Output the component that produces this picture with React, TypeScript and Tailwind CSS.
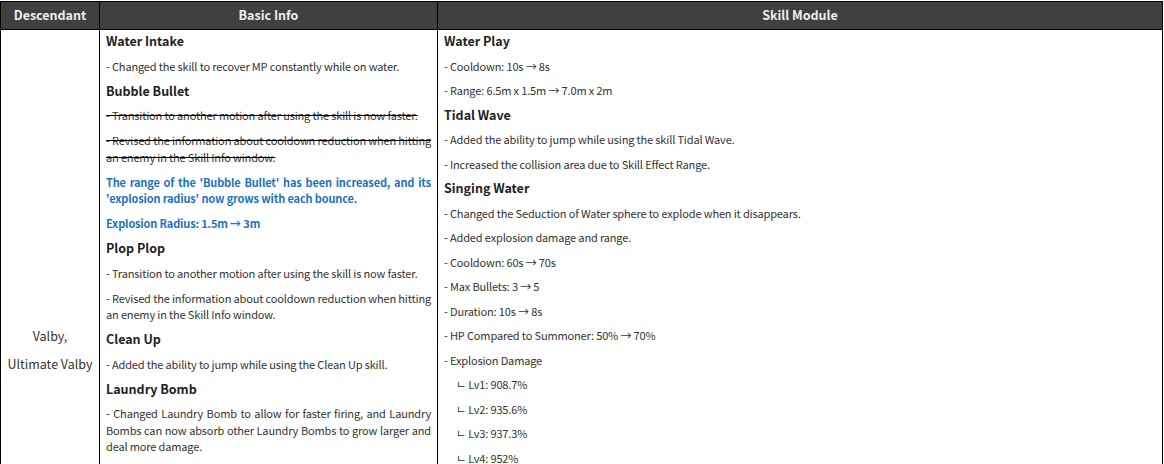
const basic: { kind: "h" | "p" | "s" | "b"; text: string }[] = [
  { kind: "h", text: "Water Intake" },
  { kind: "p", text: "- Changed the skill to recover MP constantly while on water." },
  { kind: "h", text: "Bubble Bullet" },
  { kind: "s", text: "- Transition to another motion after using the skill is now faster." },
  { kind: "s", text: "- Revised the information about cooldown reduction when hitting an enemy in the Skill Info window." },
  { kind: "b", text: "The range of the 'Bubble Bullet' has been increased, and its 'explosion radius' now grows with each bounce." },
  { kind: "b", text: "Explosion Radius: 1.5m → 3m" },
  { kind: "h", text: "Plop Plop" },
  { kind: "p", text: "- Transition to another motion after using the skill is now faster." },
  { kind: "p", text: "- Revised the information about cooldown reduction when hitting an enemy in the Skill Info window." },
  { kind: "h", text: "Clean Up" },
  { kind: "p", text: "- Added the ability to jump while using the Clean Up skill." },
  { kind: "h", text: "Laundry Bomb" },
  { kind: "p", text: "- Changed Laundry Bomb to allow for faster firing, and Laundry Bombs can now absorb other Laundry Bombs to grow larger and deal more damage." },
];

const skill: { kind: "h" | "p" | "l"; text: string }[] = [
  { kind: "h", text: "Water Play" },
  { kind: "p", text: "- Cooldown: 10s → 8s" },
  { kind: "p", text: "- Range: 6.5m x 1.5m → 7.0m x 2m" },
  { kind: "h", text: "Tidal Wave" },
  { kind: "p", text: "- Added the ability to jump while using the skill Tidal Wave." },
  { kind: "p", text: "- Increased the collision area due to Skill Effect Range." },
  { kind: "h", text: "Singing Water" },
  { kind: "p", text: "- Changed the Seduction of Water sphere to explode when it disappears." },
  { kind: "p", text: "- Added explosion damage and range." },
  { kind: "p", text: "- Cooldown: 60s → 70s" },
  { kind: "p", text: "- Max Bullets: 3 → 5" },
  { kind: "p", text: "- Duration: 10s → 8s" },
  { kind: "p", text: "- HP Compared to Summoner: 50% → 70%" },
  { kind: "p", text: "- Explosion Damage" },
  { kind: "l", text: "ㄴ Lv1: 908.7%" },
  { kind: "l", text: "ㄴ Lv2: 935.6%" },
  { kind: "l", text: "ㄴ Lv3: 937.3%" },
  { kind: "l", text: "ㄴ Lv4: 952%" },
];

function Line({ kind, text }: { kind: string; text: string }) {
  if (kind === "h")
    return <p className="text-[12.5px] font-bold leading-[16.5px] text-[#222] mb-[8px]">{text}</p>;
  if (kind === "s")
    return <p className="text-[11px] tracking-[-0.15px] leading-[16.5px] text-[#333] line-through decoration-black mb-[8.5px] text-justify">{text}</p>;
  if (kind === "b")
    return <p className="text-[11px] tracking-[-0.15px] font-bold leading-[16.5px] text-[#1f73c4] mb-[8.5px] text-justify">{text}</p>;
  if (kind === "l")
    return <p className="text-[11px] tracking-[-0.15px] leading-[16.5px] text-[#333] mb-[8px] pl-[12px]">{text}</p>;
  return <p className="text-[11px] tracking-[-0.15px] leading-[16.5px] text-[#333] mb-[8.5px] text-justify">{text}</p>;
}

export default function App() {
  return (
    <div className="bg-white pt-px" style={{ fontFamily: '"Noto Sans CJK KR", "Noto Sans", sans-serif' }}>
      <table className="w-[1163px] border-collapse table-fixed">
        <colgroup>
          <col className="w-[99px]" />
          <col className="w-[338px]" />
          <col />
        </colgroup>
        <thead>
          <tr className="bg-[#404040] text-[#eeeeee] text-[12.5px] font-bold h-[28px]">
            <th className="border border-black">Descendant</th>
            <th className="border border-black">Basic Info</th>
            <th className="border border-black">Skill Module</th>
          </tr>
        </thead>
        <tbody>
          <tr className="h-[640px] align-top">
            <td className="border border-black align-middle text-center text-[12.5px] text-[#333] leading-[17px]">
              <p className="mb-[11px]">Valby,</p>
              <p>Ultimate Valby</p>
            </td>
            <td className="border border-black px-[6px] pt-[3px]">
              {basic.map((b, i) => (
                <Line key={i} kind={b.kind} text={b.text} />
              ))}
            </td>
            <td className="border border-black px-[6px] pt-[3px] [&>p]:mb-[8px]">
              {skill.map((b, i) => (
                <Line key={i} kind={b.kind} text={b.text} />
              ))}
            </td>
          </tr>
        </tbody>
      </table>
    </div>
  );
}
